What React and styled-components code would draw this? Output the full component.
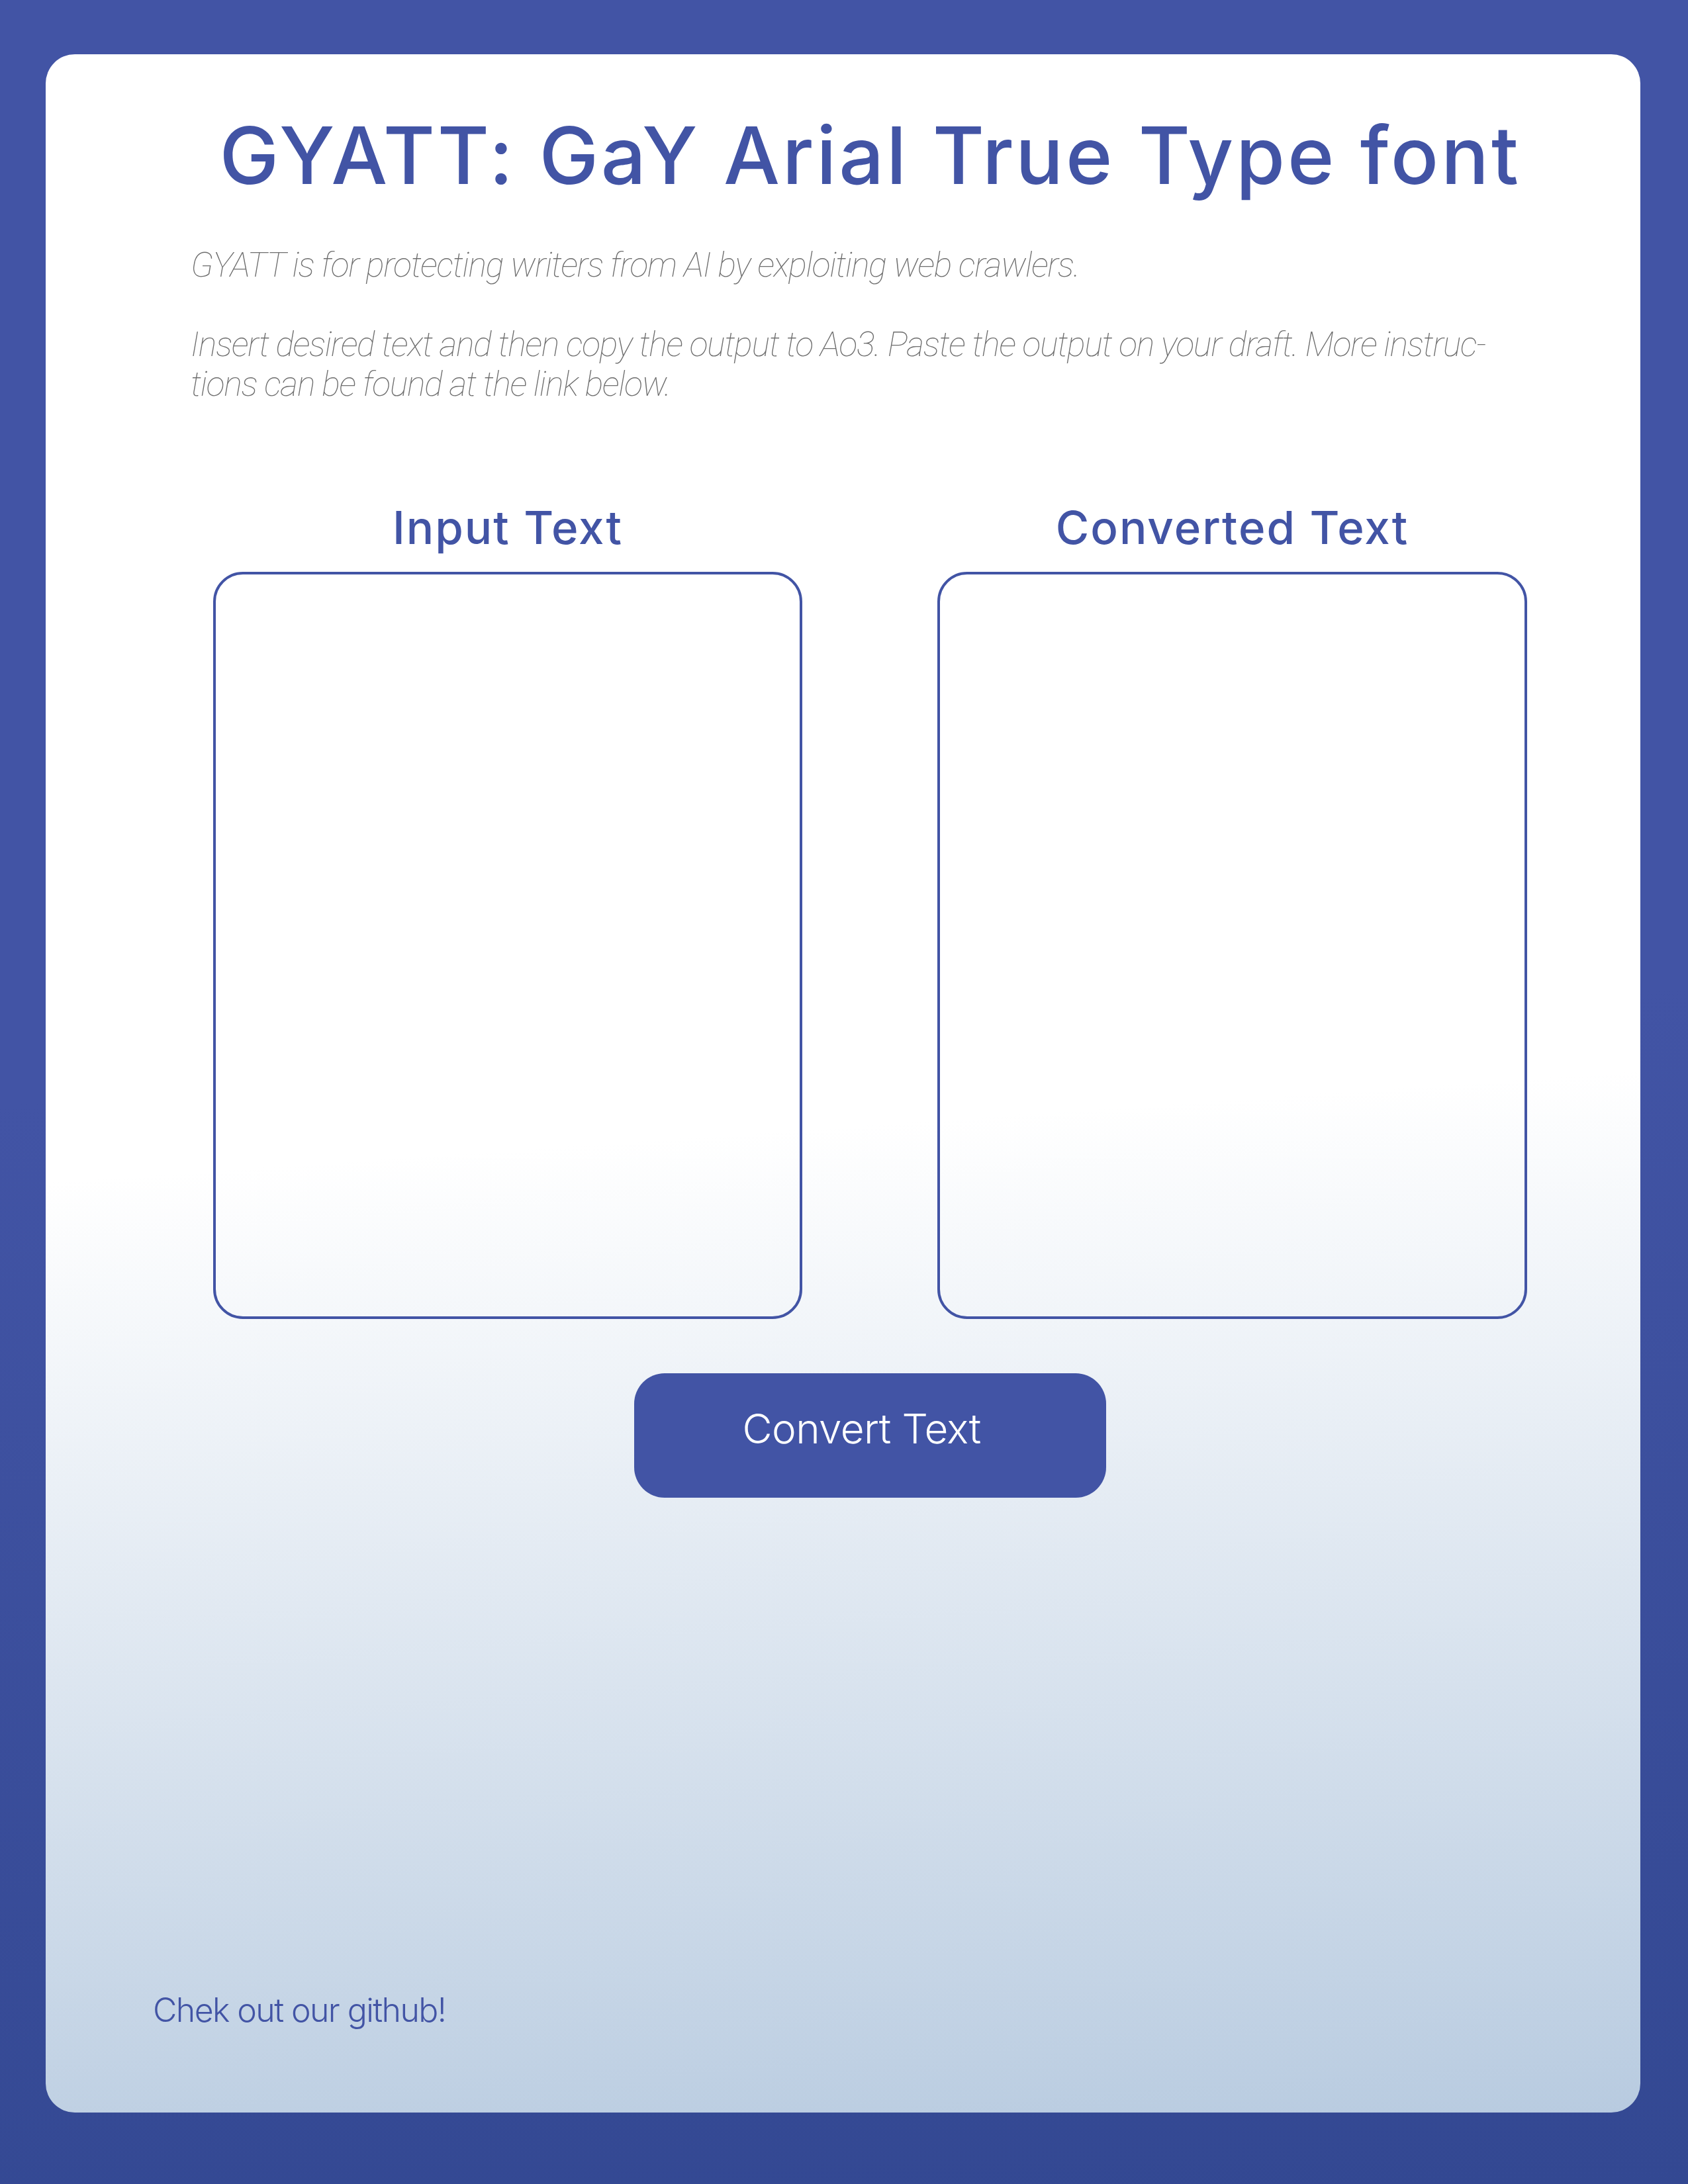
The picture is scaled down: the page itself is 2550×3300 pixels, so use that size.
import React, { useState } from "react";
import styled, { createGlobalStyle } from "styled-components";

const GlobalStyle = createGlobalStyle`
  html, body {
    margin: 0;
    padding: 0;
  }
  body {
    min-height: 3300px;
    background: linear-gradient(176deg, #4254a5 48%, #334892 100%);
    font-family: Inter, "Liberation Sans", sans-serif;
  }
`;

//hides the converted text from crawlers by slipping zero width spaces between letters
const hideFromCrawlers = (text) => text.split("").join("\u200b");

const App = () => {
  //state that stores the user's text
  const [input, setInput] = useState("");
  //state that stores the converted text
  const [output, setOutput] = useState("");

  const handleConvert = () => {
    setOutput(hideFromCrawlers(input));
  };

  return (
    <Page>
      <GlobalStyle />
      <Card>
        <Title>GYATT: GaY Arial True Type font</Title>
        <Intro>
          <IntroLine>GYATT is for protecting writers from AI by exploiting web crawlers.</IntroLine>
          <IntroLine $spaced>
            Insert desired text and then copy the output to Ao3. Paste the output on your draft. More instruc-
            <br />
            tions can be found at the link below.
          </IntroLine>
        </Intro>
        <Workspace>
          <Panels>
            <Panel>
              <PanelLabel>Input Text</PanelLabel>
              <TextBox value={input} onChange={(e) => setInput(e.target.value)} />
            </Panel>
            <Panel>
              <PanelLabel>Converted Text</PanelLabel>
              <TextBox value={output} readOnly />
            </Panel>
          </Panels>
          <ConvertButton onClick={handleConvert}>Convert Text</ConvertButton>
        </Workspace>
        <GithubLink href="#">Chek out our github!</GithubLink>
      </Card>
    </Page>
  );
};

export default App;

const Page = styled.div`
  box-sizing: border-box;
  min-height: 3300px;
  padding: 82px 73px 108px 69px;
  display: flex;
`;

const Card = styled.main`
  flex: 1;
  display: flex;
  flex-direction: column;
  border-radius: 44px;
  padding: 81px 0 125px;
  background: linear-gradient(176deg, #ffffff 52%, #b8cbe0 100%);
`;

const Title = styled.h1`
  margin: 0;
  padding: 0 171px 0 253px;
  text-align: center;
  white-space: nowrap;
  font-family: Inter, "Liberation Sans", sans-serif;
  font-size: 120px;
  line-height: 1.2;
  font-weight: 500;
  letter-spacing: 3.7px;
  color: #4254a5;
`;

const Intro = styled.div`
  margin: 64px 0 0 219px;
`;

const IntroLine = styled.p`
  margin: ${({ $spaced }) => ($spaced ? "60px 0 0" : "0")};
  font-family: Roboto, "Liberation Sans", sans-serif;
  font-style: italic;
  font-weight: 100;
  font-size: 52px;
  line-height: 60px;
  letter-spacing: -1.3px;
  color: #6e6e6e;
`;

const Workspace = styled.section`
  display: flex;
  flex-direction: column;
  align-items: center;
  padding: 0 171px 0 253px;
  margin-top: 145px;
`;

const Panels = styled.div`
  display: grid;
  grid-template-columns: 890px 891px;
  column-gap: 204px;
`;

const Panel = styled.div`
  display: flex;
  flex-direction: column;
  align-items: center;
`;

const PanelLabel = styled.h2`
  margin: 0 0 25px;
  font-family: Inter, "Liberation Sans", sans-serif;
  font-size: 69px;
  line-height: 1.2;
  font-weight: 500;
  letter-spacing: 2px;
  color: #4254a5;
`;

const TextBox = styled.textarea`
  box-sizing: border-box;
  width: 100%;
  height: 1129px;
  padding: 40px;
  border: 4px solid #4254a5;
  border-radius: 45px;
  background: transparent;
  resize: none;
  outline: none;
  font-family: Inter, "Liberation Sans", sans-serif;
  font-size: 40px;
  color: #333;
`;

const ConvertButton = styled.button`
  box-sizing: border-box;
  width: 713px;
  height: 188px;
  margin-top: 82px;
  padding: 0 26px 20px 0;
  border: none;
  border-radius: 46px;
  background: #4254a5;
  color: #ffffff;
  font-family: Inter, "Liberation Sans", sans-serif;
  font-size: 62px;
  font-weight: 300;
  letter-spacing: -0.6px;
  cursor: pointer;
`;

const GithubLink = styled.a`
  margin-top: auto;
  padding-left: 162px;
  font-family: Inter, "Liberation Sans", sans-serif;
  font-size: 50px;
  font-weight: 300;
  line-height: 1.2;
  letter-spacing: -1.6px;
  color: #4254a5;
  text-decoration: none;
`;
